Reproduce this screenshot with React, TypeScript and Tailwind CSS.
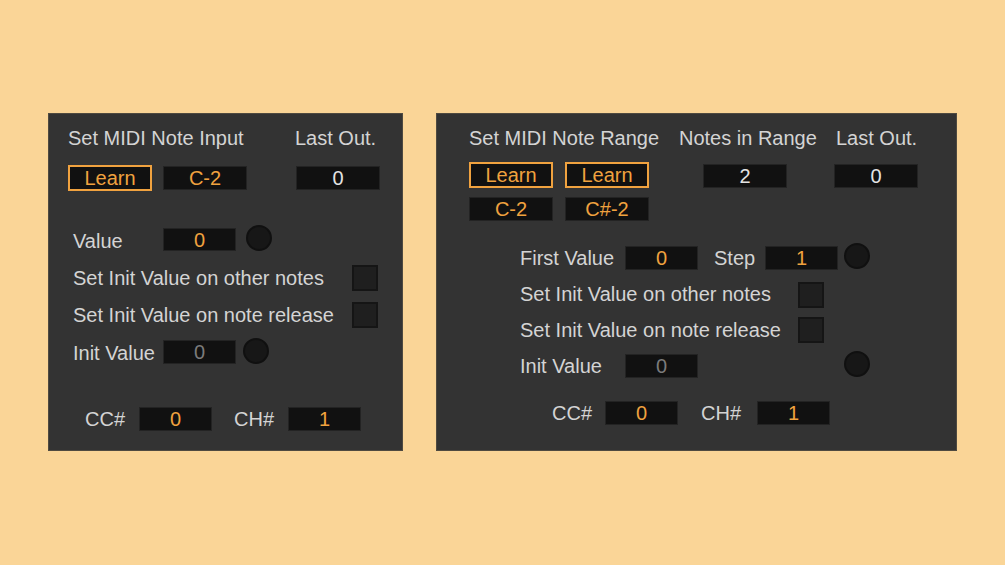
import type { ReactNode } from 'react';

const FONT = { fontFamily: '"Liberation Sans", Arial, sans-serif' };

type Tone = 'orange' | 'white' | 'dim';

const toneClass: Record<Tone, string> = {
  orange: 'text-[#f0a23f]',
  white: 'text-[#e4e4e4]',
  dim: 'text-[#7b7b7b]',
};

// Dark number box, like a live.numbox
function Field({ children, w, h = 24, tone = 'orange', className = '' }: { children: ReactNode; w: number; h?: number; tone?: Tone; className?: string }) {
  return (
    <div
      className={`flex shrink-0 items-center justify-center border border-[#232323] bg-[#111111] text-[20px] leading-none ${toneClass[tone]} ${className}`}
      style={{ width: w, height: h }}
    >
      {children}
    </div>
  );
}

function Learn({ className = '' }: { className?: string }) {
  return (
    <div className={`flex h-[26px] w-[84px] shrink-0 items-center justify-center border-2 border-[#f0a23f] bg-[#111111] text-[20px] leading-none text-[#f0a23f] ${className}`}>
      Learn
    </div>
  );
}

function Toggle({ className = '' }: { className?: string }) {
  return <div className={`h-[26px] w-[26px] shrink-0 border-2 border-[#151515] bg-[#1f1f1f] ${className}`} />;
}

function Led({ className = '' }: { className?: string }) {
  return <div className={`h-[26px] w-[26px] shrink-0 rounded-full border-2 border-[#101010] bg-[#171717] ${className}`} />;
}

function Label({ children, className = '' }: { children: ReactNode; className?: string }) {
  return <span className={`shrink-0 whitespace-nowrap text-[20px] leading-[24px] text-[#d4d4d4] ${className}`}>{children}</span>;
}

function NoteInputPanel() {
  return (
    <div className="flex h-[338px] w-[355px] shrink-0 flex-col border border-[#4f4a40] bg-[#333333] pl-[19px] pt-[12px]">
      <div className="flex h-[24px] items-center">
        <Label className="w-[227px]">Set MIDI Note Input</Label>
        <Label>Last Out.</Label>
      </div>

      <div className="mt-[15px] flex h-[26px] items-center">
        <Learn />
        <Field w={84} className="ml-[11px]">C-2</Field>
        <Field w={84} tone="white" className="ml-[49px]">0</Field>
      </div>

      <div className="mt-[34px] flex h-[26px] items-start">
        <Label className="mt-[4px] w-[95px] pl-[5px]">Value</Label>
        <Field w={73} h={23} className="mt-[3px]">0</Field>
        <Led className="ml-[10px]" />
      </div>

      <div className="mt-[14px] flex h-[26px] items-start">
        <Label className="mt-[1px] w-[284px] pl-[5px]">Set Init Value on other notes</Label>
        <Toggle />
      </div>

      <div className="mt-[11px] flex h-[26px] items-start">
        <Label className="mt-[1px] w-[284px] pl-[5px]">Set Init Value on note release</Label>
        <Toggle />
      </div>

      <div className="mt-[10px] flex h-[26px] items-start">
        <Label className="mt-[3px] w-[95px] pl-[5px]">Init Value</Label>
        <Field w={73} tone="dim" className="mt-[2px]">0</Field>
        <Led className="ml-[7px]" />
      </div>

      <div className="mt-[43px] flex h-[24px] items-center">
        <Label className="w-[71px] pl-[17px]">CC#</Label>
        <Field w={73}>0</Field>
        <Label className="ml-[22px] w-[54px]">CH#</Label>
        <Field w={73}>1</Field>
      </div>
    </div>
  );
}

function NoteRangePanel() {
  return (
    <div className="flex h-[338px] w-[521px] shrink-0 flex-col border border-[#4f4a40] bg-[#333333] pl-[32px] pt-[12px]">
      <div className="flex h-[24px] items-center">
        <Label className="w-[210px]">Set MIDI Note Range</Label>
        <Label className="w-[157px]">Notes in Range</Label>
        <Label>Last Out.</Label>
      </div>

      <div className="mt-[12px] flex h-[26px] items-start">
        <Learn />
        <Learn className="ml-[12px]" />
        <Field w={84} tone="white" className="ml-[54px] mt-[2px]">2</Field>
        <Field w={84} tone="white" className="ml-[47px] mt-[2px]">0</Field>
      </div>

      <div className="mt-[9px] flex h-[24px] items-center">
        <Field w={84}>C-2</Field>
        <Field w={84} className="ml-[12px]">C#-2</Field>
      </div>

      <div className="mt-[22px] flex h-[26px] items-start pl-[51px]">
        <Label className="mt-[3px] w-[105px]">First Value</Label>
        <Field w={73} className="mt-[3px]">0</Field>
        <Label className="ml-[16px] mt-[3px] w-[51px]">Step</Label>
        <Field w={73} className="mt-[3px]">1</Field>
        <Led className="ml-[6px]" />
      </div>

      <div className="mt-[13px] flex h-[26px] items-start pl-[51px]">
        <Label className="mt-[0px] w-[278px]">Set Init Value on other notes</Label>
        <Toggle />
      </div>

      <div className="mt-[9px] flex h-[26px] items-start pl-[51px]">
        <Label className="mt-[1px] w-[278px]">Set Init Value on note release</Label>
        <Toggle />
      </div>

      <div className="mt-[8px] flex h-[26px] items-start pl-[51px]">
        <Label className="mt-[3px] w-[105px]">Init Value</Label>
        <Field w={73} tone="dim" className="mt-[3px]">0</Field>
        <Led className="ml-[146px]" />
      </div>

      <div className="mt-[24px] flex h-[24px] items-center pl-[83px]">
        <Label className="w-[53px]">CC#</Label>
        <Field w={73}>0</Field>
        <Label className="ml-[23px] w-[56px]">CH#</Label>
        <Field w={73}>1</Field>
      </div>
    </div>
  );
}

export default function App() {
  return (
    <div className="h-[565px] w-[1005px] overflow-hidden bg-[#fad597]" style={FONT}>
      <div className="flex gap-[33px] pl-[48px] pt-[113px]">
        <NoteInputPanel />
        <NoteRangePanel />
      </div>
    </div>
  );
}
